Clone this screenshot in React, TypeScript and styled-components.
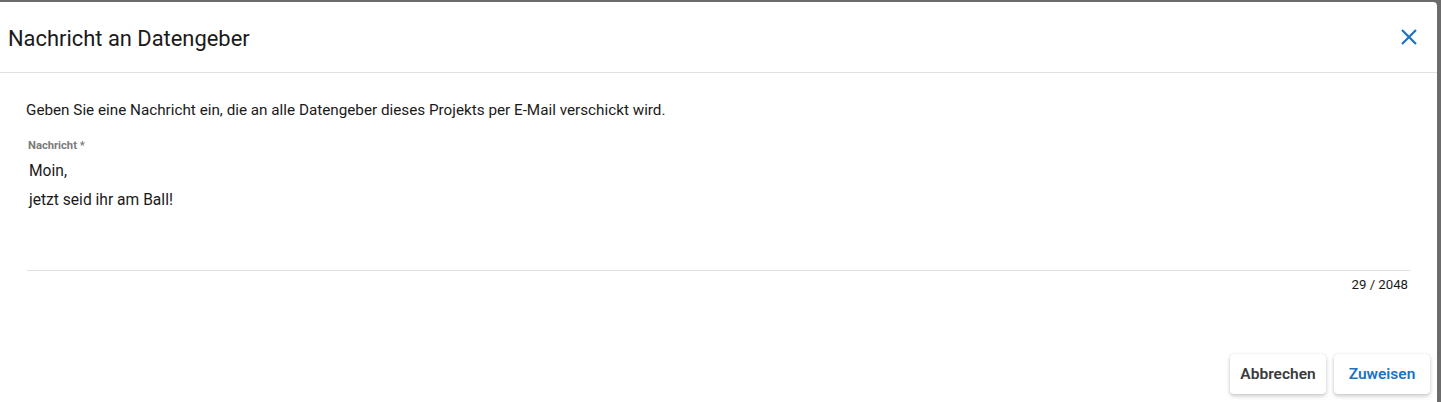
import React from "react";
import styled, { createGlobalStyle } from "styled-components";

const Global = createGlobalStyle`
  html, body { margin: 0; padding: 0; background: #6b6b6b; }
  body { font-family: Roboto, "Liberation Sans", sans-serif; overflow: hidden; }
  * { box-sizing: border-box; }
`;

const Page = styled.div`
  width: 1441px;
  height: 402px;
  padding: 2px 4px 0 0;
`;

const Dialog = styled.div`
  width: 1437px;
  height: 400px;
  background: #fff;
  border-radius: 0 4px 0 0;
  display: flex;
  flex-direction: column;
`;

const Header = styled.div`
  height: 71px;
  display: flex;
  align-items: center;
  justify-content: space-between;
  padding: 0 16px 0 8px;
  border-bottom: 1px solid #e0e0e0;
`;

const Title = styled.h2`
  margin: 0;
  font-size: 21.9px;
  font-weight: 400;
  color: #1a1a1a;
  padding-top: 2px;
`;

const CloseButton = styled.button`
  border: 0;
  background: none;
  padding: 0;
  width: 24px;
  height: 24px;
  display: flex;
  align-items: center;
  justify-content: center;
  color: #1a73c4;
  cursor: pointer;
`;

const Content = styled.div`
  flex: 1;
  padding: 27px 26px 0 26px;
  display: flex;
  flex-direction: column;
`;

const Intro = styled.p`
  margin: 0;
  font-size: 15.25px;
  line-height: 20px;
  color: #1a1a1a;
`;

const Field = styled.div`
  margin-top: 19px;
  padding-left: 1px;
  width: 1384px;
  display: flex;
  flex-direction: column;
`;

const Label = styled.label`
  font-size: 11.2px;
  font-weight: 700;
  color: #7a7a7a;
  line-height: 14px;
  padding-left: 1px;
`;

const TextArea = styled.div`
  margin-top: 4px;
  padding-left: 2px;
  height: 114px;
  font-size: 15.6px;
  line-height: 29px;
  color: #1a1a1a;
  white-space: pre-wrap;
  border-bottom: 1px solid #e0e0e0;
`;

const Counter = styled.div`
  margin-top: 6px;
  align-self: flex-end;
  padding-right: 2px;
  font-size: 13.2px;
  line-height: 16px;
  color: #1a1a1a;
`;

const Actions = styled.div`
  display: flex;
  justify-content: flex-end;
  gap: 8px;
  padding: 0 7px 8px 0;
`;

const ActionButton = styled.button<{ $primary?: boolean }>`
  width: 96px;
  height: 40px;
  border: 0;
  border-radius: 4px;
  background: #fff;
  box-shadow: 0 2px 4px rgba(0, 0, 0, 0.22), 0 0 1px rgba(0, 0, 0, 0.15);
  font-family: Roboto, "Liberation Sans", sans-serif;
  font-size: 15.5px;
  font-weight: 600;
  padding: 0;
  color: ${(p) => (p.$primary ? "#1a73c4" : "#3a3a3a")};
  cursor: pointer;
`;

export default function App() {
  return (
    <>
      <Global />
      <Page>
        <Dialog>
          <Header>
            <Title>Nachricht an Datengeber</Title>
            <CloseButton aria-label="Schließen">
              <svg width="18" height="18" viewBox="0 0 18 18">
                <path d="M2 2 L16 16 M16 2 L2 16" stroke="currentColor" strokeWidth="2.2" fill="none" />
              </svg>
            </CloseButton>
          </Header>
          <Content>
            <Intro>
              Geben Sie eine Nachricht ein, die an alle Datengeber dieses Projekts per E-Mail verschickt wird.
            </Intro>
            <Field>
              <Label>Nachricht *</Label>
              <TextArea>{"Moin,\njetzt seid ihr am Ball!"}</TextArea>
              <Counter>29 / 2048</Counter>
            </Field>
          </Content>
          <Actions>
            <ActionButton>Abbrechen</ActionButton>
            <ActionButton $primary>Zuweisen</ActionButton>
          </Actions>
        </Dialog>
      </Page>
    </>
  );
}
